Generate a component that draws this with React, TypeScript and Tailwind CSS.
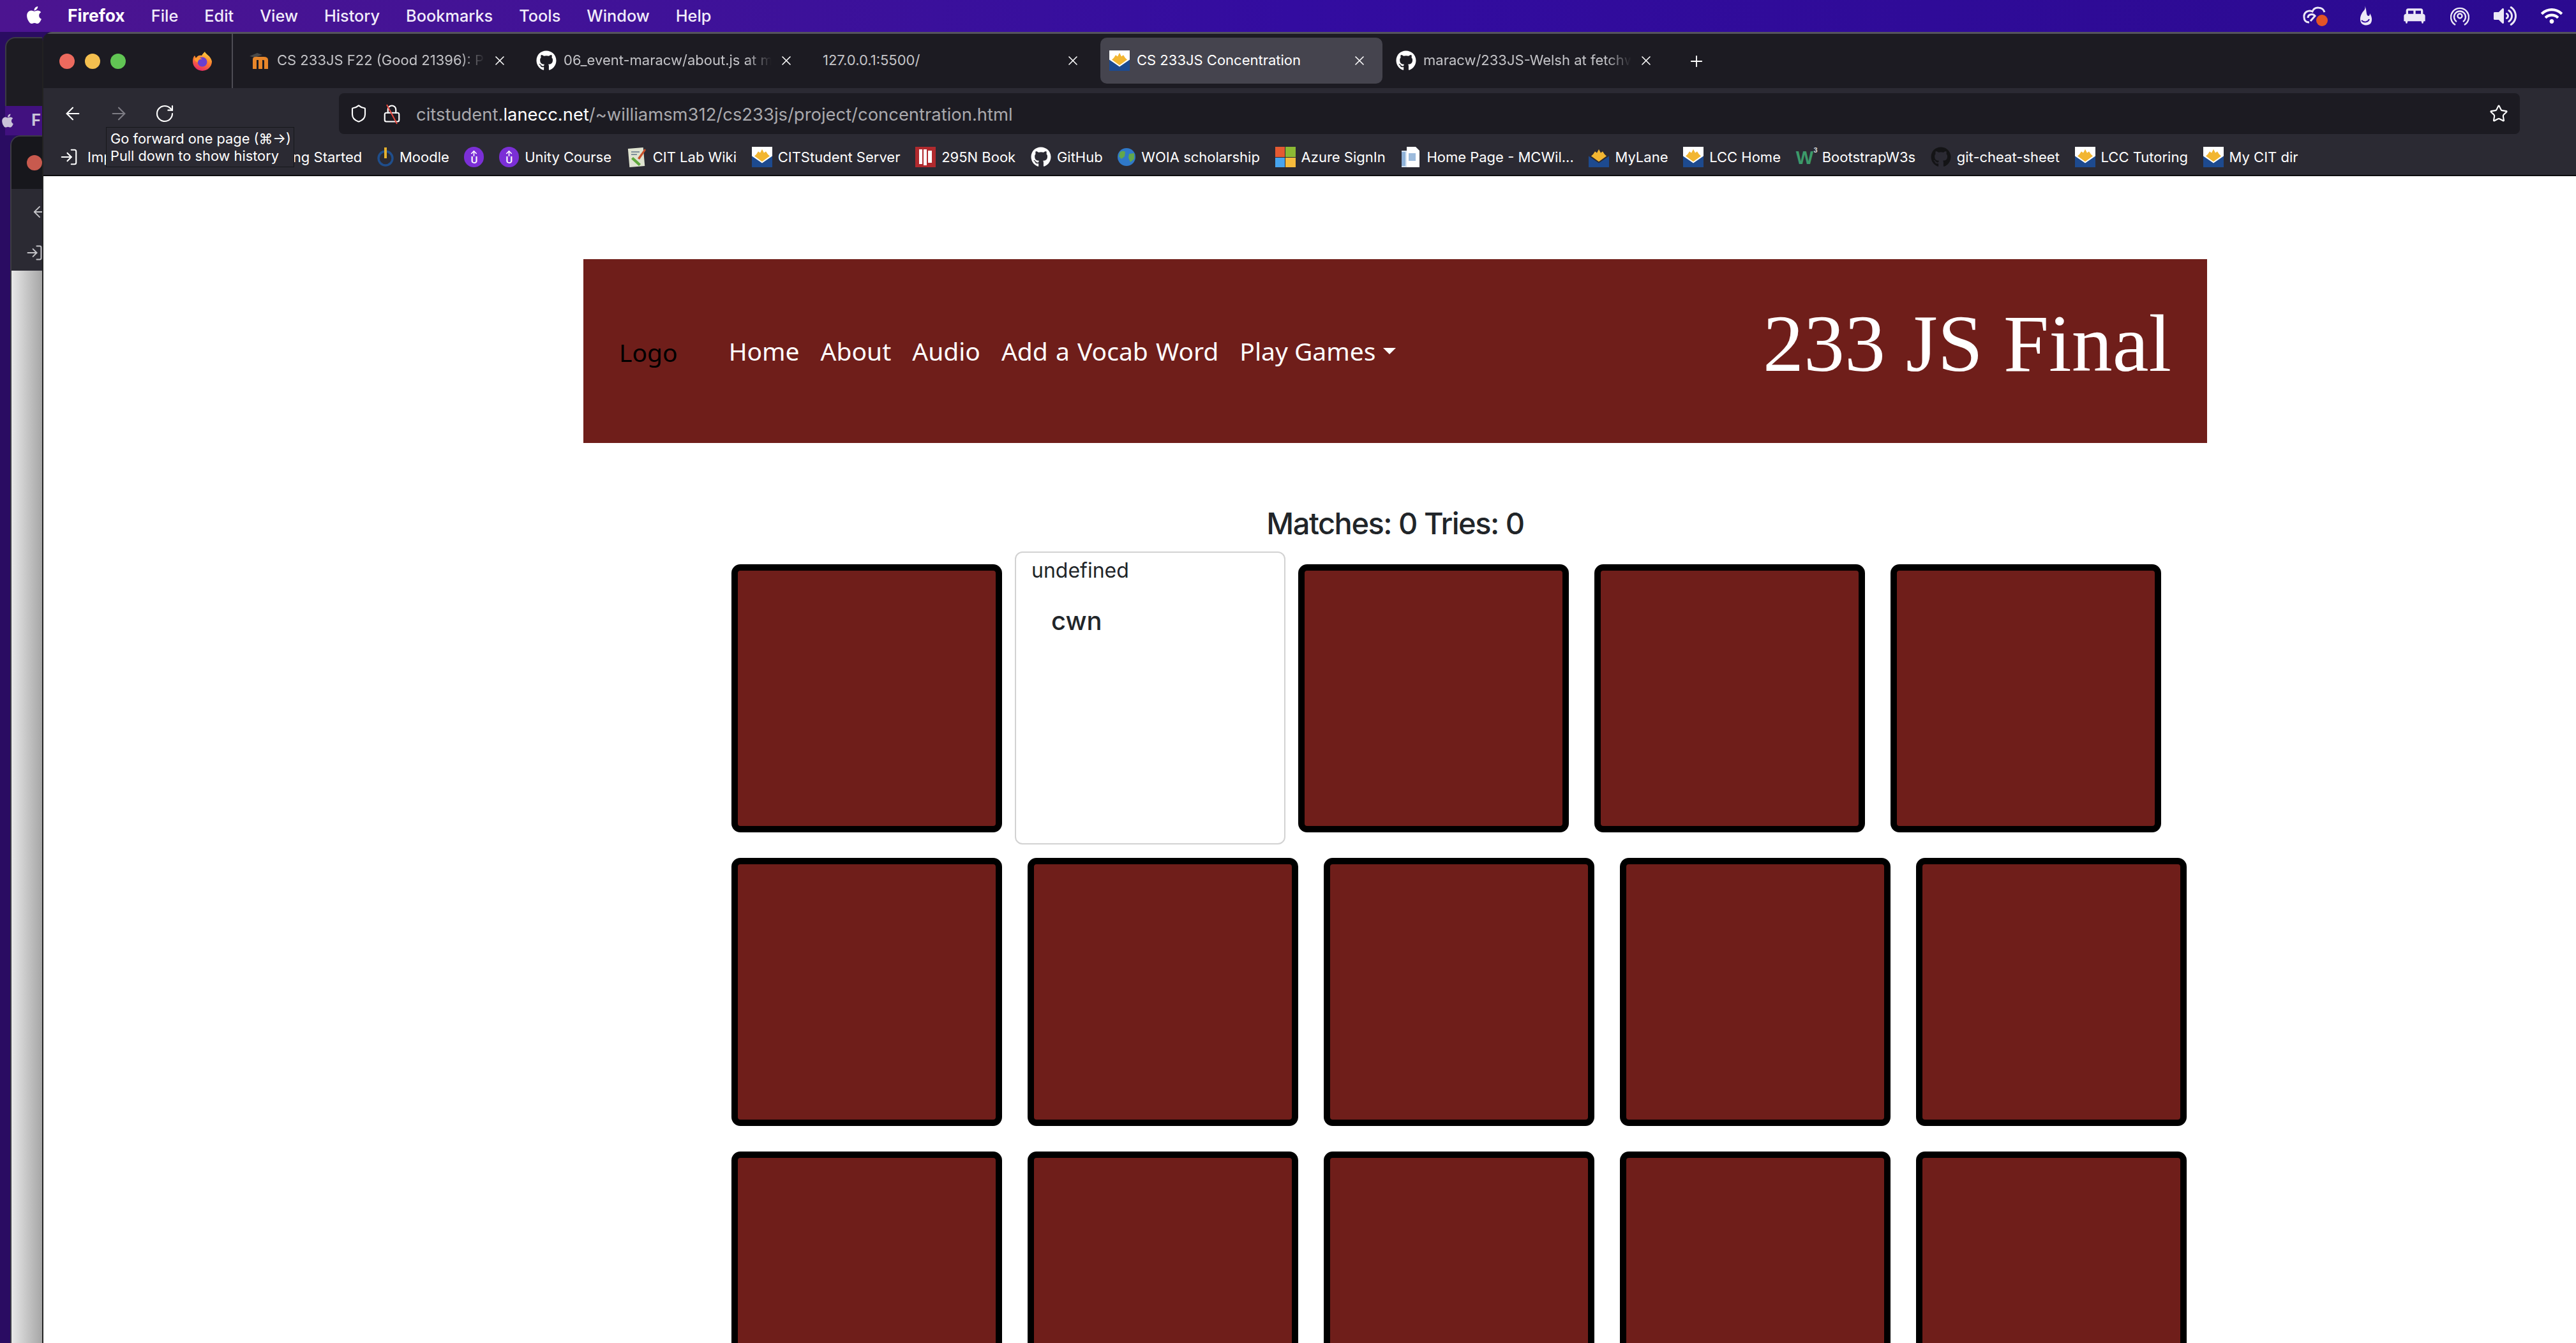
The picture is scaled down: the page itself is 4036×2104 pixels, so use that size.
import { JSX, ReactNode } from "react";
import { ArrowLeft, ArrowRight, RotateCw, Shield, Lock, Star, Plus, X, LogIn, ArrowUp } from "lucide-react";
import { FaGithub, FaApple, FaVolumeUp, FaWifi } from "react-icons/fa";
import { MdKingBed } from "react-icons/md";

const UI = "font-['Inter','Noto_Sans',sans-serif]";

const Lcc = ({ plain = false }: { plain?: boolean }): JSX.Element => (
    <svg viewBox="0 0 32 44" className="w-[32px] h-[32px] shrink-0" preserveAspectRatio="none">
        <rect width="32" height="44" fill={plain ? "#2b2a33" : "#fff"} />
        <path d="M0 20 L16 35 L32 20 V44 H0 Z" fill="#1d4a8f" />
        <path d="M16 32 L4 20 L7 16 L10 10 L13 13 L16 5 L19 13 L22 10 L25 16 L28 20 Z" fill="#f2b632" />
    </svg>
);

const Firefox = (): JSX.Element => (
    <svg viewBox="0 0 32 32" className="w-[32px] h-[32px] shrink-0">
        <defs>
            <linearGradient id="ffx" x1="0.7" y1="0" x2="0.3" y2="1">
                <stop offset="0" stopColor="#ffd23f" />
                <stop offset="0.5" stopColor="#ff7a2f" />
                <stop offset="1" stopColor="#e5246c" />
            </linearGradient>
        </defs>
        <path d="M20 1 C21 5 29 7 31 16 A15 15 0 1 1 1 16 C1 12 2 9 4 7 L6 11 C8 7 12 6 15 7 C16 5 18 3 20 1 Z" fill="url(#ffx)" />
        <circle cx="16" cy="17" r="7.5" fill="#6a3fd0" />
        <path d="M3 12 C8 9 13 10 16 13 C12 12 9 14 9 18 C6 17 4 15 3 12 Z" fill="#ff9a2e" />
    </svg>
);

const Moodle = (): JSX.Element => (
    <svg viewBox="0 0 32 32" className="w-[32px] h-[32px] shrink-0">
        <path d="M0 9 L12 4 L20 7 L8 11 Z" fill="#4a4a4a" />
        <path d="M5 29 V14 Q5 10 10 10 H22 Q29 10 29 15 V29 H23 V16 Q23 15 21 15 H20 V29 H14 V15 H11 V29 Z" fill="#e8862a" />
    </svg>
);

const Power = (): JSX.Element => (
    <svg viewBox="0 0 26 32" className="w-[26px] h-[32px] shrink-0">
        <circle cx="13" cy="18" r="11" fill="none" stroke="#1f4e8c" strokeWidth="3.5" />
        <rect x="11" y="1" width="4" height="17" fill="#e6b12e" />
    </svg>
);

const UnityU = (): JSX.Element => (
    <span className="w-[31px] h-[32px] shrink-0 rounded-full bg-[#7b2fd6] flex flex-col items-center justify-center text-white">
        <ArrowUp size={13} strokeWidth={3} className="-mb-[3px]" />
        <span className={`${UI} text-[15px] leading-[14px] font-semibold`}>U</span>
    </span>
);

const Notebook = (): JSX.Element => (
    <svg viewBox="0 0 32 32" className="w-[32px] h-[32px] shrink-0">
        <rect x="3" y="2" width="24" height="29" fill="#dfe3d0" transform="rotate(-5 15 16)" />
        <path d="M7 8 H20 M7 12 H16" stroke="#7f8f9a" strokeWidth="2" />
        <path d="M17 18 L28 3 L30 5 L20 20 Z" fill="#c8502a" />
        <path d="M7 19 L19 30 L22 27 L10 16 Z" fill="#5fa83c" />
    </svg>
);

const BookIcon = (): JSX.Element => (
    <svg viewBox="0 0 32 32" className="w-[32px] h-[32px] shrink-0">
        <rect width="32" height="32" fill="#b02a2e" />
        <path d="M6 4 H11 V27 H6 Z M13 4 H18 V29 H13 Z M20 6 H26 V25 H20 Z" fill="#fff" />
    </svg>
);

const Globe = (): JSX.Element => (
    <svg viewBox="0 0 28 28" className="w-[28px] h-[28px] shrink-0">
        <circle cx="14" cy="14" r="14" fill="#2f78c8" />
        <path d="M4 6 Q9 3 12 6 L11 13 L6 17 L2 13 Z M18 9 L26 8 L26 17 L20 22 L17 15 Z" fill="#63a84a" />
    </svg>
);

const Microsoft = (): JSX.Element => (
    <span className="w-[32px] h-[32px] shrink-0 grid grid-cols-2 gap-[1px]">
        <span className="bg-[#e45a32]" />
        <span className="bg-[#8cb934]" />
        <span className="bg-[#47a4ee]" />
        <span className="bg-[#f6bb3c]" />
    </span>
);

const Doc = (): JSX.Element => (
    <svg viewBox="0 0 32 32" className="w-[32px] h-[32px] shrink-0">
        <path d="M2 6 H22 V32 H2 Z" fill="#d7e4f2" />
        <path d="M10 0 H24 L30 6 V32 H10 Z" fill="#fff" />
        <path d="M13 10 H24 V22 H13 Z" fill="#9dbbdc" />
        <rect x="2" y="8" width="6" height="22" fill="#8fb2d8" />
    </svg>
);

const W3 = (): JSX.Element => (
    <span className="w-[32px] h-[32px] shrink-0 relative font-['Liberation_Sans',sans-serif] font-bold text-[#3c9a6a] leading-none">
        <span className="absolute left-0 top-[3px] text-[29px] tracking-[-2px]">W</span>
        <span className="absolute right-[-2px] top-0 text-[11px] text-[#d8d8d8]">3</span>
    </span>
);

const bookmarks: { label: string; icon: ReactNode }[] = [
    { label: "Import bookmarks...", icon: <LogIn size={30} strokeWidth={1.7} className="text-white shrink-0 -ml-[5px] mr-[5px]" /> },
    { label: "Getting Started", icon: <Firefox /> },
    { label: "Moodle", icon: <Power /> },
    { label: "", icon: <UnityU /> },
    { label: "Unity Course", icon: <UnityU /> },
    { label: "CIT Lab Wiki", icon: <Notebook /> },
    { label: "CITStudent Server", icon: <Lcc /> },
    { label: "295N Book", icon: <BookIcon /> },
    { label: "GitHub", icon: <FaGithub size={32} className="text-white shrink-0" /> },
    { label: "WOIA scholarship", icon: <Globe /> },
    { label: "Azure SignIn", icon: <Microsoft /> },
    { label: "Home Page - MCWil...", icon: <Doc /> },
    { label: "MyLane", icon: <Lcc plain /> },
    { label: "LCC Home", icon: <Lcc /> },
    { label: "BootstrapW3s", icon: <W3 /> },
    { label: "git-cheat-sheet", icon: <FaGithub size={32} className="text-[#141416] shrink-0" /> },
    { label: "LCC Tutoring", icon: <Lcc /> },
    { label: "My CIT dir", icon: <Lcc /> },
];

const menus = ["File", "Edit", "View", "History", "Bookmarks", "Tools", "Window", "Help"];

const tabs: { label: string; icon: ReactNode; active?: boolean; fade?: boolean }[] = [
    { label: "CS 233JS F22 (Good 21396): Project", icon: <Moodle />, fade: true },
    { label: "06_event-maracw/about.js at master", icon: <FaGithub size={32} className="text-white shrink-0" />, fade: true },
    { label: "127.0.0.1:5500/", icon: null },
    { label: "CS 233JS Concentration", icon: <Lcc />, active: true },
    { label: "maracw/233JS-Welsh at fetchwork", icon: <FaGithub size={32} className="text-white shrink-0" />, fade: true },
];

const MenuBar = (): JSX.Element => (
    <div className={`${UI} h-[50px] shrink-0 flex items-center pl-[38px] pr-[21px] text-[25.3px] font-medium text-[#f1ecfa] bg-gradient-to-r from-[#4c1490] via-[#330ca0] to-[#2b0a90]`}>
        <FaApple size={31} className="text-white mr-[37px] -mt-[4px]" />
        <span className="font-bold text-white text-[26.5px] mr-[41px]">Firefox</span>
        <div className="flex gap-[41px]">
            {menus.map((menu) => (
                <span key={menu}>{menu}</span>
            ))}
        </div>
        <div className="ml-auto flex items-center text-[#ece8f6]">
            <svg viewBox="0 0 42 36" className="w-[42px] h-[36px]">
                <path d="M4 20 C3 12 11 8 17 11 C20 3 33 3 36 12 M12 28 C6 28 4 24 4 20 M10 21 C10 15 18 14 21 18 L14 26" fill="none" stroke="currentColor" strokeWidth="3" />
                <circle cx="32" cy="25" r="9" fill="#e35426" />
            </svg>
            <svg viewBox="0 0 20 34" className="w-[20px] h-[34px] ml-[49px]">
                <path d="M8 1 C10 6 7 8 4 12 C1 17 0 22 2 27 C4 32 13 33 17 29 C20 25 20 19 16 13 C16 17 14 18 12 16 C10 12 11 6 8 1 Z" fill="currentColor" />
                <path d="M3 24 C7 28 13 27 15 22" fill="none" stroke="#330ca0" strokeWidth="2" />
            </svg>
            <MdKingBed size={40} className="ml-[46px]" />
            <svg viewBox="0 0 30 32" className="w-[30px] h-[32px] ml-[36px]" fill="none" stroke="currentColor" strokeWidth="2.4">
                <path d="M8 30 A14 14 0 1 1 22 30" />
                <path d="M10 25 A9 9 0 1 1 20 25" />
                <circle cx="15" cy="16" r="3.5" />
            </svg>
            <FaVolumeUp size={36} className="ml-[38px]" />
            <FaWifi size={34} className="ml-[38px] text-white" />
        </div>
    </div>
);

const TabStrip = (): JSX.Element => (
    <div className={`${UI} h-[88px] shrink-0 flex bg-[#1c1b22] border-t-[3px] border-[#55545c]`}>
        <div className="w-[297px] shrink-0 flex items-center pl-[25px] border-r-[2px] border-[#4e4d55]">
            <span className="w-[24px] h-[24px] rounded-full bg-[#ec6a5e]" />
            <span className="w-[24px] h-[24px] rounded-full bg-[#f4bf4f] ml-[16px]" />
            <span className="w-[24px] h-[24px] rounded-full bg-[#61c554] ml-[16px]" />
            <span className="ml-[104px]">
                <Firefox />
            </span>
        </div>
        <div className="flex items-center pl-[12px] gap-[7px]">
            {tabs.map((tab) => (
                <div
                    key={tab.label}
                    className={`w-[442px] h-[72px] -mt-[2px] rounded-[10px] pl-[14px] pr-[24px] flex items-center gap-[11px] text-[22px] ${
                        tab.active ? "bg-[#45444e] text-white" : "text-[#c4c4c8]"
                    }`}
                >
                    {tab.icon}
                    <span
                        className={`flex-1 overflow-hidden whitespace-nowrap ${
                            tab.fade ? "[mask-image:linear-gradient(to_right,black_88%,transparent)]" : ""
                        }`}
                    >
                        {tab.label}
                    </span>
                    <X size={24} strokeWidth={1.6} className="text-white shrink-0" />
                </div>
            ))}
            <Plus size={28} strokeWidth={1.6} className="text-white ml-[22px]" />
        </div>
    </div>
);

const Toolbar = (): JSX.Element => (
    <div className={`${UI} h-[72px] shrink-0 flex items-center bg-[#2b2a33] pt-[8px]`}>
        <div className="w-[463px] shrink-0 flex items-center pl-[30px] gap-[40px]">
            <ArrowLeft size={32} strokeWidth={1.6} className="text-white" />
            <ArrowRight size={32} strokeWidth={1.6} className="text-[#7d7c84]" />
            <RotateCw size={32} strokeWidth={1.6} className="text-white" />
        </div>
        <div className="h-[64px] w-[3417px] rounded-[8px] bg-[#1c1b22] flex items-center pl-[16px] pr-[18px]">
            <Shield size={30} strokeWidth={1.7} className="text-white" />
            <span className="relative ml-[22px]">
                <Lock size={30} strokeWidth={1.7} className="text-white" />
                <span className="absolute left-[14px] top-[-1px] h-[34px] w-[2px] bg-[#e5483f] -rotate-[28deg]" />
            </span>
            <span className="ml-[23px] pt-[3px] text-[27.4px] text-[#a9a9ad] whitespace-nowrap">
                citstudent.<span className="text-white">lanecc.net</span>/~williamsm312/cs233js/project/concentration.html
            </span>
            <Star size={30} strokeWidth={1.7} className="text-white ml-auto" />
        </div>
    </div>
);

const Bookmarks = (): JSX.Element => (
    <div className={`${UI} relative h-[66px] shrink-0 flex items-center pl-[30px] pt-[8px] gap-[23.7px] bg-[#2b2a33] text-[22px] text-white border-b-[2px] border-[#0c0c0e] whitespace-nowrap`}>
        {bookmarks.map((item, index) => (
            <div key={index} className="flex items-center gap-[9px]">
                {item.icon}
                {item.label && <span>{item.label}</span>}
            </div>
        ))}
        <div className="absolute left-[98px] top-[-11px] w-[295px] h-[63px] bg-[#2b2a33] border border-[#17171b] pl-[6px] text-[21.8px] leading-[27px] pt-[4px]">
            <div>Go forward one page (⌘→)</div>
            <div>Pull down to show history</div>
        </div>
    </div>
);

const Card = (): JSX.Element => (
    <div className="w-[424px] h-[420px] m-[20px] border-[10px] border-black rounded-[14px] bg-[#6f1e1a]" />
);

const Desktop = (): JSX.Element => (
    <div className="w-[66px] shrink-0 flex flex-col pl-[8px]">
        <div className="h-[108px] mt-[8px] shrink-0 bg-[#1d1c22] rounded-tl-[16px] border-l-[2px] border-t-[2px] border-[#3c3b44]" />
        <div className={`${UI} h-[46px] shrink-0 flex items-center justify-between bg-[#41117f] text-[#c9c3d8] text-[25px] font-bold pr-[2px]`}>
            <FaApple size={24} className="-ml-[8px]" />
            <span>F</span>
        </div>
        <div className="flex-1 ml-[8px] flex flex-col rounded-tl-[16px] border-l-[2px] border-t-[2px] border-[#3c3b44]">
            <div className="h-[82px] shrink-0 bg-[#17171c] rounded-tl-[14px] flex items-center pl-[24px]">
                <span className="w-[24px] h-[24px] rounded-full bg-[#c85a4e]" />
            </div>
            <div className="h-[128px] shrink-0 bg-[#2b2a33] flex flex-col pl-[30px] pt-[22px] gap-[36px] text-[#c4c4c8] overflow-hidden">
                <ArrowLeft size={28} strokeWidth={1.6} className="shrink-0" />
                <LogIn size={28} strokeWidth={1.7} className="shrink-0 -ml-[8px]" />
            </div>
            <div className="flex-1 bg-gradient-to-r from-[#e8e8e8] to-[#a6a6a6]" />
        </div>
    </div>
);

const App = (): JSX.Element => {
    return (
        <div className="w-[4036px] h-[2104px] overflow-hidden flex flex-col bg-[#2a0c62]">
            <MenuBar />
            <div className="flex-1 min-h-0 flex">
                <Desktop />
                <div className="flex-1 min-w-0 flex flex-col rounded-tl-[16px] overflow-hidden border-l-[2px] border-[#222]">
                    <TabStrip />
                    <Toolbar />
                    <Bookmarks />
                    <main className="flex-1 min-h-0 bg-white overflow-hidden pl-[846px] pt-[130px]">
                        <header className="w-[2544px] h-[288px] bg-[#6f1e1a] flex items-center pl-[56px] pr-[56px] font-['Noto_Sans',sans-serif] text-[39px]">
                            <span className="text-black pt-[4px]">Logo</span>
                            <nav className="ml-[80px] flex items-center gap-[33px] text-white">
                                <span>Home</span>
                                <span>About</span>
                                <span>Audio</span>
                                <span className="[word-spacing:2px]">Add a Vocab Word</span>
                                <span className="flex items-center gap-[12px]">
                                    Play Games
                                    <span className="w-0 h-0 border-x-[10px] border-t-[10px] border-x-transparent border-t-white" />
                                </span>
                            </nav>
                            <h1 className="ml-auto font-['Liberation_Serif',serif] text-[128px] leading-none text-white -mt-[24px]">233 JS Final</h1>
                        </header>
                        <h3 className={`${UI} w-[2544px] h-[60px] mt-[96px] mb-[14px] text-center text-[47px] tracking-[-1.5px] leading-[60px] font-medium text-[#212529]`}>
                            Matches: 0 Tries: 0
                        </h3>
                        <div className="ml-[212px] w-[2332px] flex flex-wrap items-start content-start">
                            <Card />
                            <div className={`${UI} w-[424px] h-[459px] border-[2px] border-[#d2d2d2] rounded-[12px] bg-white text-[#212529] pl-[24px]`}>
                                <div className="text-[32px] leading-[40px] pt-[8px]">undefined</div>
                                <div className="text-[40px] leading-[48px] font-medium pl-[31px] pt-[35px]">cwn</div>
                            </div>
                            {Array.from({ length: 13 }, (_, i) => (
                                <Card key={i} />
                            ))}
                        </div>
                    </main>
                </div>
            </div>
        </div>
    );
};

export default App;
